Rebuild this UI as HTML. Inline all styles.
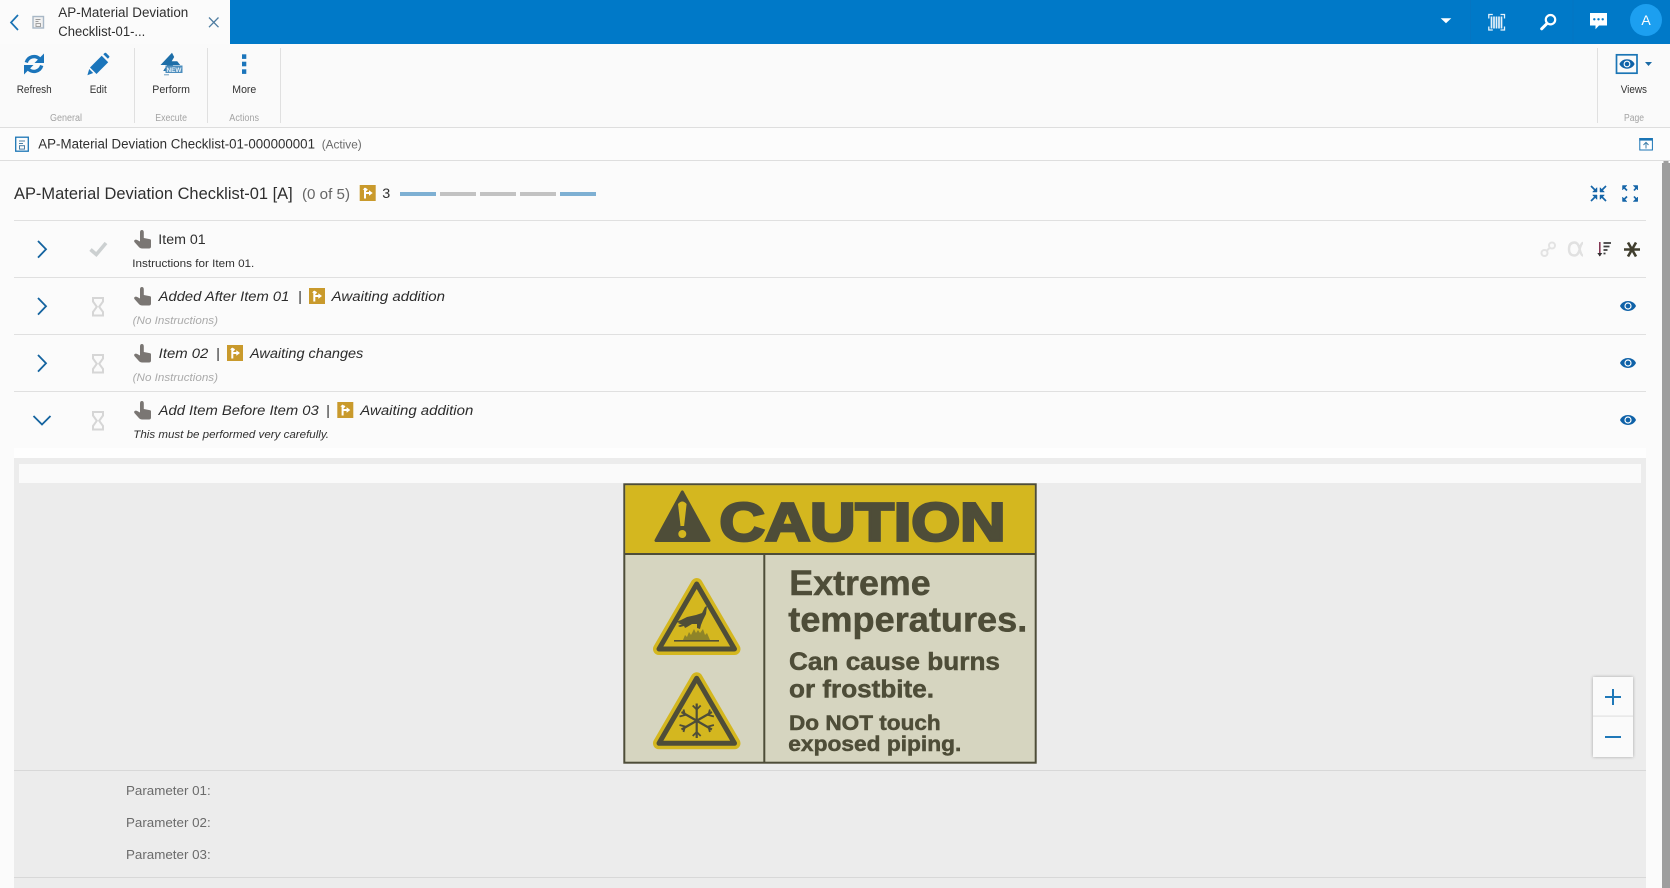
<!DOCTYPE html>
<html><head><meta charset="utf-8"><title>AP-Material Deviation Checklist</title>
<style>
html,body{margin:0;padding:0;width:1670px;height:888px;overflow:hidden;background:#fbfbfb}
svg{display:block;position:absolute;left:0;top:0}
text{font-family:"Liberation Sans",Arial,sans-serif;fill:#2f2f2f}
.tb{font-size:10.6px;fill:#333}
.gp{font-size:10px;fill:#a3a3a3}
.it{font-size:14.2px;font-style:italic;fill:#2b2b2b}
.ni{font-size:11px;font-style:italic;fill:#aaa}
.pm{font-size:13.2px;fill:#6b6b6b}
.sg{font-weight:bold;fill:#4e4d38;stroke:#4e4d38;stroke-width:.5px}
</style></head>
<body>
<svg width="1670" height="888" viewBox="0 0 1670 888" xmlns="http://www.w3.org/2000/svg">
<defs>
<g id="hand"><path d="M140 232.500q0-2.500 1.900-2.500t1.900 2.500v5.500l6.400 1.300q.8.2.8 1v6.200q0 2-2 2h-7.200q-1.800 0-2.800-1.400l-4.600-5.100q-.8-1.600.8-2.300 1-.3 2 .3l2.800 1.500z" fill="#7a7673"/></g>
<g id="flag"><rect width="16" height="16" fill="#c99a2c"/><path d="M5.300 13.500V3M5.300 8h4.700M5.300 5.800l2.200-1.800" stroke="#fff" stroke-width="2" fill="none"/><path d="M9.300 5.300l3.700 2.700-3.700 2.700z" fill="#fff"/><path d="M3 4.800l2.300-2.300 2.300 2.300z" fill="#fff"/></g>
<g id="eye"><path d="M-8 0C-5-6.600 5-6.600 8 0C5 6.600-5 6.600-8 0z" fill="#0f62a8"/><circle r="3.600" fill="#fff"/><circle r="2.400" fill="#0f62a8"/></g>
<g id="hg"><path d="M1 1h10v3.500L7.200 9.800 11 15v3.500H1V15l3.800-5.200L1 4.500z" fill="none" stroke="#d6d6d6" stroke-width="2"/></g>
<g id="ch"><path d="M0 0l8 8.300-8 8.300" fill="none" stroke="#14639f" stroke-width="1.800"/></g>
<g id="tri"><path d="M696.700 584L659 649H734.500z" fill="#d4b71f" stroke="#d4b71f" stroke-width="12" stroke-linejoin="round"/><path d="M696.700 584L659 649H734.500z" fill="#d4b71f" stroke="#4e4d38" stroke-width="5" stroke-linejoin="round"/></g>
</defs>

<!-- top bar -->
<rect x="0" y="0" width="1670" height="44" fill="#0079c8"/>
<rect x="0" y="0" width="230" height="44" fill="#fbfbfb"/>
<path d="M18 15l-7 7.500 7 7.500" fill="none" stroke="#1a73b4" stroke-width="1.700"/>
<rect x="33" y="16.500" width="10.500" height="11.500" fill="#f1f1f1" stroke="#a8b7c6" stroke-width="1.400"/>
<path d="M35.500 19.500h5M35.500 21.500h3" stroke="#9a9a9a" stroke-width="1"/><rect x="36" y="23.500" width="4.500" height="3" fill="none" stroke="#9a9a9a" stroke-width=".9"/>
<text x="58.300" y="17" font-size="13.500" textLength="130" lengthAdjust="spacingAndGlyphs">AP-Material Deviation</text>
<text x="58.300" y="36" font-size="13.500" textLength="87" lengthAdjust="spacingAndGlyphs">Checklist-01-...</text>
<path d="M209 17.500l9.500 9.700M218.500 17.500L209 27.200" stroke="#4f7da1" stroke-width="1.300"/>

<path d="M1440.700 18.300h10.600l-5.300 5z" fill="#fff"/>
<rect x="1470" y="0" width="1" height="44" fill="#0575c2"/>
<rect x="1572.500" y="0" width="1" height="44" fill="#0575c2"/>
<!-- barcode -->
<path d="M1488.800 18.500v-4h4M1500.500 14.500h4v4M1504.500 26.500v3.500h-4M1492.800 30h-4v-3.500" fill="none" stroke="#e6f3fc" stroke-width="1.300"/>
<path d="M1491.500 16.500v12M1494 16.500v12M1496.500 16.500v12M1499 16.500v12M1501.500 16.500v12" stroke="#fff" stroke-width="1.700" opacity=".9"/>
<!-- search -->
<circle cx="1550.500" cy="19.700" r="4.700" fill="none" stroke="#fff" stroke-width="2.200"/>
<path d="M1546.500 24l-4.800 4.800" stroke="#fff" stroke-width="3" stroke-linecap="round"/>
<!-- chat -->
<path d="M1590 13h17v12.500h-8l-3.500 3.800v-3.800H1590z" fill="#fff"/>
<circle cx="1594.300" cy="19.300" r="1.200" fill="#0079c8"/><circle cx="1598.500" cy="19.300" r="1.200" fill="#0079c8"/><circle cx="1602.700" cy="19.300" r="1.200" fill="#0079c8"/>
<!-- avatar -->
<circle cx="1646" cy="20" r="16" fill="#1c9ff0"/>
<text x="1646" y="25" font-size="14" text-anchor="middle" style="fill:#fff">A</text>

<!-- toolbar -->
<rect x="0" y="44" width="1670" height="83" fill="#fafafa"/>
<rect x="0" y="127" width="1670" height="1" fill="#dedede"/>
<rect x="134" y="48" width="1" height="75" fill="#e0e0e0"/>
<rect x="207" y="48" width="1" height="75" fill="#e0e0e0"/>
<rect x="280" y="48" width="1" height="75" fill="#e0e0e0"/>
<rect x="1597" y="48" width="1" height="75" fill="#e0e0e0"/>
<!-- refresh -->
<g fill="#1b75bb"><path d="M26.300 62.500A8 8 0 0 1 39.500 58.800" fill="none" stroke="#1b75bb" stroke-width="3.400"/><path d="M44 53.500v9.500h-9.500z"/><path d="M41.700 65.500A8 8 0 0 1 28.500 69.200" fill="none" stroke="#1b75bb" stroke-width="3.400"/><path d="M24 74.500V65h9.500z"/></g>
<!-- pencil -->
<g fill="#1b75bb"><path d="M90 67.500L101.700 55.800l6.500 6.500L96.500 74z"/><path d="M103.300 54.200l1.500-1.300q.6-.4 1.200 0l3.200 3.200q.4.600 0 1.200l-1.300 1.500z"/><path d="M89.200 69l4 4-5.800 2.300z"/></g>
<!-- perform -->
<path d="M172 52.700L160.500 65h6.500l-3.800 6 4 0 6-6h7l-3-3.700h-5.500l2.500-4.300z" fill="#1d6ea8"/>
<rect x="165.500" y="65.500" width="17" height="7.500" fill="#4c8dbd"/>
<path d="M164 74.800h5" stroke="#6c9cbe" stroke-width="1"/>
<text x="166.500" y="71.800" font-size="6.600" font-weight="bold" textLength="15" lengthAdjust="spacingAndGlyphs" style="fill:#e8f2f9">NEW</text>
<!-- more -->
<rect x="242" y="54.300" width="4.300" height="4.600" fill="#1b75bb"/><rect x="242" y="61.700" width="4.300" height="4.600" fill="#1b75bb"/><rect x="242" y="69.300" width="4.300" height="4.600" fill="#1b75bb"/>
<text class="tb" x="16.700" y="93" textLength="35" lengthAdjust="spacingAndGlyphs">Refresh</text>
<text class="tb" x="89.700" y="93" textLength="17" lengthAdjust="spacingAndGlyphs">Edit</text>
<text class="tb" x="152.300" y="93" textLength="37.700" lengthAdjust="spacingAndGlyphs">Perform</text>
<text class="tb" x="232.300" y="93" textLength="24" lengthAdjust="spacingAndGlyphs">More</text>
<text class="tb" x="1620.700" y="93" textLength="26.300" lengthAdjust="spacingAndGlyphs">Views</text>
<text class="gp" x="50" y="121" textLength="32" lengthAdjust="spacingAndGlyphs">General</text>
<text class="gp" x="155.300" y="121" textLength="31.700" lengthAdjust="spacingAndGlyphs">Execute</text>
<text class="gp" x="229.300" y="121" textLength="29.700" lengthAdjust="spacingAndGlyphs">Actions</text>
<text class="gp" x="1624" y="121" textLength="20" lengthAdjust="spacingAndGlyphs">Page</text>
<!-- views -->
<rect x="1616.500" y="54.800" width="20.500" height="18.400" fill="none" stroke="#1b75b5" stroke-width="1.700"/>
<use href="#eye" transform="translate(1627 64) scale(.95)"/>
<path d="M1645 62h7l-3.500 4z" fill="#1b6aa5"/>

<!-- breadcrumb row -->
<rect x="0" y="128" width="1670" height="32" fill="#fcfcfc"/>
<rect x="0" y="160" width="1670" height="1" fill="#dedede"/>
<rect x="15.700" y="137.200" width="12.600" height="14" fill="none" stroke="#1b75b5" stroke-width="1.300"/>
<path d="M19 141h6M19 143.500h4" stroke="#4b7fa5" stroke-width="1.100"/><rect x="19.500" y="145.700" width="5" height="3.400" fill="none" stroke="#4b7fa5" stroke-width="1"/>
<text x="38.300" y="148.700" font-size="13.500" textLength="276.700" lengthAdjust="spacingAndGlyphs">AP-Material Deviation Checklist-01-000000001</text>
<text x="321.700" y="148.700" font-size="12.200" textLength="40" lengthAdjust="spacingAndGlyphs" style="fill:#6a6a6a">(Active)</text>
<rect x="1639.800" y="138.500" width="12.600" height="11.500" fill="#fff" stroke="#1b75b5" stroke-width="1"/>
<rect x="1639.300" y="138" width="13.400" height="2.600" fill="#1b75b5"/>
<path d="M1646 148.500v-6M1643.500 145l2.500-2.700 2.500 2.700" fill="none" stroke="#3d7ea8" stroke-width="1"/>

<!-- main -->
<rect x="1662" y="161" width="8" height="727" fill="#9e9e9e"/>
<rect x="1662" y="161" width="1.500" height="2" fill="#fcfcfc"/><rect x="1668.500" y="161" width="1.500" height="2" fill="#fcfcfc"/>

<text x="14" y="199" font-size="16.600" textLength="278.700" lengthAdjust="spacingAndGlyphs">AP-Material Deviation Checklist-01 [A]</text>
<text x="302" y="199" font-size="14.500" textLength="48" lengthAdjust="spacingAndGlyphs" style="fill:#666">(0 of 5)</text>
<use href="#flag" x="359.700" y="185"/>
<text x="382.300" y="198" font-size="14" textLength="8" lengthAdjust="spacingAndGlyphs">3</text>
<rect x="400" y="192" width="36" height="4" fill="#7eb0d3"/>
<rect x="440" y="192" width="36" height="4" fill="#c2c2c2"/>
<rect x="480" y="192" width="36" height="4" fill="#c2c2c2"/>
<rect x="520" y="192" width="36" height="4" fill="#c2c2c2"/>
<rect x="560" y="192" width="36" height="4" fill="#7eb0d3"/>
<!-- collapse -->
<g stroke="#1565a8" stroke-width="1.700" fill="#1565a8">
<path d="M1591 186l4.500 4.500M1606 186l-4.500 4.500M1591 201l4.500-4.500M1606 201l-4.500-4.500" fill="none"/>
<path d="M1597 187.500v4.500h-4.500zM1600 187.500v4.500h4.500zM1597 199.500V195h-4.500zM1600 199.500V195h4.500z" stroke-width=".5"/>
<path d="M1627 190.500l-3.500-3.500M1634 190.500l3-3.500M1627 196.500l-3.500 3.500M1634 196.500l3 3.500" fill="none"/>
<path d="M1622.500 185.500h4.500l-4.500 4.500zM1637.700 185.500h-4.500l4.500 4.500zM1622.500 201.500h4.500l-4.500-4.500zM1637.700 201.500h-4.500l4.500-4.500z" stroke-width=".5"/>
</g>

<!-- row lines -->
<rect x="14" y="220" width="1632" height="1" fill="#e0e0e0"/>
<rect x="14" y="277" width="1632" height="1" fill="#e0e0e0"/>
<rect x="14" y="334" width="1632" height="1" fill="#e0e0e0"/>
<rect x="14" y="391" width="1632" height="1" fill="#e0e0e0"/>

<!-- row 1 -->
<use href="#ch" x="38" y="241"/>
<path d="M90.500 249.500l5.800 5 9.700-11.500" fill="none" stroke="#ccd0d1" stroke-width="3.600"/>
<use href="#hand"/>
<text x="158.300" y="244" font-size="14.200" textLength="47.400" lengthAdjust="spacingAndGlyphs">Item 01</text>
<text x="132.300" y="267" font-size="11" textLength="122" lengthAdjust="spacingAndGlyphs">Instructions for Item 01.</text>
<!-- row 1 right -->
<g fill="none" stroke="#e3e3e3" stroke-width="2"><circle cx="1544.500" cy="253" r="3"/><circle cx="1552" cy="245.500" r="3"/><path d="M1547 250.500l2.500-2.500"/></g>
<path d="M1583 243q-2 0-3.500 7-1.500 5.500-5 5.500-5.500 0-5.500-6.500t5.500-6.500q3.500 0 5 6 1.500 7 3.500 7" fill="none" stroke="#e1e1e1" stroke-width="2.400"/>
<path d="M1599.800 242v14" stroke="#7d2e4c" stroke-width="1.500"/><path d="M1597.300 253l2.500 3.500 2.500-3.500z" fill="#333"/>
<path d="M1603.500 243h7.500M1603.500 246.500h6M1603.500 250h4M1603.500 253.500h2" stroke="#3e3e3e" stroke-width="1.800"/>
<path d="M1624 249.500h16M1628 242.500l8 14M1636 242.500l-8 14" stroke="#403e2e" stroke-width="2.600"/>

<!-- row 2 -->
<use href="#ch" x="38" y="298"/>
<use href="#hg" x="92" y="297"/>
<use href="#hand" y="57"/>
<text class="it" x="158.700" y="301" textLength="130.600" lengthAdjust="spacingAndGlyphs">Added After Item 01</text>
<text class="it" x="298" y="301">|</text>
<use href="#flag" x="309" y="288"/>
<text class="it" x="331.700" y="301" textLength="113.300" lengthAdjust="spacingAndGlyphs">Awaiting addition</text>
<text class="ni" x="132.700" y="324" textLength="85.300" lengthAdjust="spacingAndGlyphs">(No Instructions)</text>
<use href="#eye" x="1628" y="306"/>

<!-- row 3 -->
<use href="#ch" x="38" y="355"/>
<use href="#hg" x="92" y="354"/>
<use href="#hand" y="114"/>
<text class="it" x="158.700" y="358" textLength="49.600" lengthAdjust="spacingAndGlyphs">Item 02</text>
<text class="it" x="216" y="358">|</text>
<use href="#flag" x="227" y="345"/>
<text class="it" x="250" y="358" textLength="113.300" lengthAdjust="spacingAndGlyphs">Awaiting changes</text>
<text class="ni" x="132.700" y="381" textLength="85.300" lengthAdjust="spacingAndGlyphs">(No Instructions)</text>
<use href="#eye" x="1628" y="363"/>

<!-- row 4 -->
<path d="M33.500 416l8.500 8.500 8.500-8.500" fill="none" stroke="#14639f" stroke-width="1.800"/>
<use href="#hg" x="92" y="411"/>
<use href="#hand" y="171"/>
<text class="it" x="158.700" y="415" textLength="160" lengthAdjust="spacingAndGlyphs">Add Item Before Item 03</text>
<text class="it" x="326" y="415">|</text>
<use href="#flag" x="337.300" y="402"/>
<text class="it" x="360.300" y="415" textLength="113" lengthAdjust="spacingAndGlyphs">Awaiting addition</text>
<text x="133.300" y="438" font-size="11" font-style="italic" textLength="195.700" lengthAdjust="spacingAndGlyphs">This must be performed very carefully.</text>
<use href="#eye" x="1628" y="420"/>

<!-- expanded area -->
<rect x="14" y="448" width="1632" height="10" fill="#fefefe"/>
<rect x="14" y="458" width="1632" height="430" fill="#ececec"/>
<rect x="19" y="464" width="1622" height="19" fill="#fafafa"/>
<rect x="14" y="770" width="1632" height="1" fill="#d8d8d8"/>
<rect x="14" y="877" width="1632" height="1" fill="#d8d8d8"/>

<!-- caution image -->
<g>
<rect x="624.300" y="484.300" width="411.400" height="278.400" fill="#d6d5c0" stroke="#4e4d38" stroke-width="2"/>
<rect x="625.300" y="485.300" width="409.400" height="68" fill="#d4b71f"/>
<rect x="624" y="553" width="412" height="2" fill="#4e4d38"/>
<rect x="763.300" y="554" width="2" height="209" fill="#4e4d38"/>
<path d="M682.300 492L656 540.500H709z" fill="#4e4d38" stroke="#4e4d38" stroke-width="3" stroke-linejoin="round"/>
<path d="M678 504q4.300-5 8.600 0l-2.500 22h-3.600z" fill="#d4b71f"/><circle cx="682.300" cy="534" r="4" fill="#d4b71f"/>
<text x="719.500" y="540.400" font-size="54" font-weight="bold" textLength="286" lengthAdjust="spacingAndGlyphs" stroke="#4e4d38" stroke-width="2.800" style="fill:#4e4d38">CAUTION</text>
<text class="sg" x="789.300" y="595" font-size="35" textLength="141.400" lengthAdjust="spacingAndGlyphs">Extreme</text>
<text class="sg" x="788.300" y="631.700" font-size="35" textLength="239" lengthAdjust="spacingAndGlyphs">temperatures.</text>
<text class="sg" x="789" y="670" font-size="25" textLength="211" lengthAdjust="spacingAndGlyphs">Can cause burns</text>
<text class="sg" x="789" y="697.700" font-size="25" textLength="145" lengthAdjust="spacingAndGlyphs">or frostbite.</text>
<text class="sg" x="789" y="730" font-size="21.500" textLength="151.700" lengthAdjust="spacingAndGlyphs">Do NOT touch</text>
<text class="sg" x="788.300" y="751" font-size="21.500" textLength="173" lengthAdjust="spacingAndGlyphs">exposed piping.</text>
<use href="#tri"/>
<path d="M676 622l5-2 6-3 9-2 6-2 3-6 2-1-1 8-3 6-2 5-1 4-3-1 0-4-5 0-5 3-2 1-1-2-4 1-2-1 4-2-4 0 2-1z" fill="#4e4d38"/>
<path d="M683 640l2-5 2 2 2-5 2 3 3-6 2 4 2-3 2 3 3-4 2 6 2-2 3 7z" fill="#8f8428"/>
<rect x="674" y="640" width="45" height="1.600" fill="#4e4d38"/>
<use href="#tri" y="94.300"/>
<g stroke="#4e4d38" stroke-width="2.200" fill="none">
<path d="M696.700 703.500v34.500M681.500 712l30.400 17.500M711.900 712l-30.400 17.500"/>
<path d="M692.700 705.500l4 4 4-4M692.700 736l4-4 4 4M679.500 716.500l5.500-1.500-1.500-5.500M713.900 716.500l-5.500-1.500 1.500-5.500M679.500 725l5.500 1.500-1.500 5.500M713.900 725l-5.500 1.500 1.500 5.500" stroke-width="1.800"/>
</g>
</g>

<!-- zoom buttons -->
<rect x="1593" y="677" width="40" height="80" fill="#fafafa" style="filter:drop-shadow(0 0 1.500px rgba(0,0,0,.3))"/>
<rect x="1593" y="715.500" width="40" height="1.200" fill="#e2e2e2"/>
<path d="M1605 697h16M1613 689v16" stroke="#1f78b8" stroke-width="2"/>
<path d="M1605 737h16" stroke="#1f78b8" stroke-width="2"/>

<!-- parameters -->
<text class="pm" x="126" y="795" textLength="84.700" lengthAdjust="spacingAndGlyphs">Parameter 01:</text>
<text class="pm" x="126" y="827" textLength="84.700" lengthAdjust="spacingAndGlyphs">Parameter 02:</text>
<text class="pm" x="126" y="859" textLength="84.700" lengthAdjust="spacingAndGlyphs">Parameter 03:</text>
</svg>
</body></html>
